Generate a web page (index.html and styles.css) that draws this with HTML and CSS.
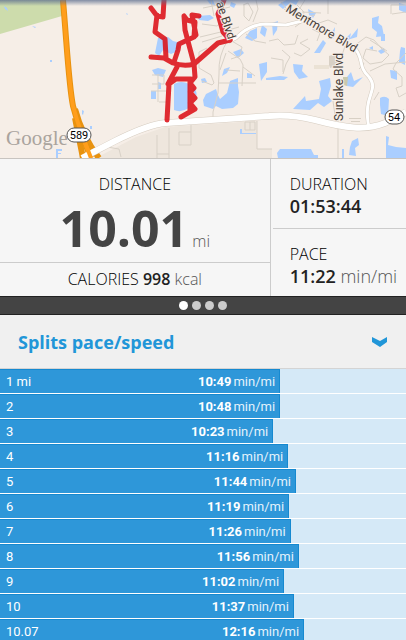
FILE: index.html
```html
<!DOCTYPE html>
<html lang="en">
<head>
  <meta charset="UTF-8">
  <meta name="viewport" content="width=device-width, initial-scale=1.0">
  <title>Workout summary</title>
  <link rel="stylesheet" href="styles.css">
</head>
<body>
  <div class="map">
    <svg viewBox="0 0 406 158" preserveAspectRatio="xMidYMid slice" role="img" aria-label="Route map">
      <defs>
        <linearGradient id="shade" x1="0" y1="0" x2="0" y2="1">
          <stop offset="0" stop-color="#5c6d8e" stop-opacity=".75"/>
          <stop offset="1" stop-color="#5c6d8e" stop-opacity="0"/>
        </linearGradient>
      </defs>
      <rect width="406" height="158" fill="#f6eee7"/>
      <path d="M0 0H62V16L0 34Z" fill="#cddcac"/>
      <path d="M96 158L136 137L165 127L257 121V149H272V158Z" fill="#eee6dd"/>

      <!-- lakes -->
      <g fill="#aaceff">
        <path d="M4 6l3 2 1 3-3-2zM32 26l4 1-1 1zM126 13l2 1-1 1zM50 60h2v2h-2zM82 110l2 1-1 4-1-1zM90 126h2v3h-2zM56 149h6v2h-4v2h3v1h-3v4h-2z"/>
        <path d="M174 84Q181 80 189 84V108Q181 113 174 110ZM158 38l10-1 5 4 8 2-3 8-7 3-8-4-4 6-4-3zM152 70l6-2 8 2-3 7-8-2zM151 91h5v8h-5zM158 82l3 1v6h-3z"/>
        <path d="M203 100L206 94L212 91L216 89L218 95L220 99L227 93L230 81L238 78V86L239 92L238 104L233 108L222 109L216 106L213 109L204 106Z"/>
        <path d="M196 96q-4-5-3-9 5 5 3 9zM198 16l12-1 4 3-6 3-9-1zM245 38l5-7 7-3v10l-5 3zM233 52l8-3 3 4-6 5zM224 69l6-2-3 6-5 3zM201 79l4-1 2 4-5 1zM247 73l5 1v4h-5zM259 64l8-2v10l-6 9zM231 2l5 2-2 4-4-2zM262 25l5 4-2 8-5-4zM207 0h6l2 5-5-1z"/>
        <path d="M293 64L303 65L302 71L308 77L299 79L294 72ZM319 81L330 78L331 86L328 96L332 101L324 107L318 103L310 110L293 109L305 96L306 101L319 99L321 89ZM347 77L351 72L354 81L363 77L353 87L347 86Z"/>
        <path d="M372 18l7-2-1 7 4 3 2 10-8 1 1-5-5-4zM314 53l9-13 3 3-6 10zM328 39l7-12-1 12zM346 38l5-5-1 5 8-10-1 9-10 3zM380 98q5-3 9 1l-1 17-7-2-1-9zM399 3l7 2v8l-7-3zM381 34h4v7h-4zM401 47l4 1v17l-6-3 1-11zM378 51l6-3 1 4-4 2zM390 70l7 1v9l-6-2zM369 48l4-2v4z"/>
        <path d="M266 78l14-2 8 1-4 3h-18zM272 23l6-2-1 9-4 6zM278 5l8-5 5 2-8 7zM286 0h13l-3 5zM308 9l8 4-3 5-4-3zM277 153l3-4h31l3 6h4v3h-40zM352 141l6-3 1 7-4 3 1 8-7-1 1-8zM342 149h2v9h-2zM386 136l3 1-1 8 8 2 10 1v10h-20zM240 129h2v4h14v1h-16z"/>
      </g>

      <!-- side streets -->
      <g class="streets">
        <path d="M80 158V149L96 150L101 146L119 149L121 157M157 135V158M169 128V158M191 125V145H179V132H191M157 154H169M245 122V130H255V122H245M250 122V130M257 121V149H272"/>
        <path d="M202 24L217 26L224 20M200 37L225 31L239 27M202 42L222 36M199 68L211 75L214 83L212 85L202 81M207 48L199 52V68M152 75H164V84H152M158 74V102M151 91H167M159 102H167"/>
        <path d="M228 40Q218 55 219 74L218 93L213 112V117M228 51L240 59L243 65L242 86M226 53L220 70M230 40L242 47L240 56L231 59M246 34L255 41L266 43M217 10L230 7M243 5L248 3L253 12L249 21L244 16V5M243 67L255 76M226 70L240 71M218 83H256"/>
        <path d="M203 8L218 5L224 14M211 0L214 16M256 0L258 9L253 22M266 25L280 24M281 2L290 13L300 8L305 0M284 9L299 19L315 15M302 12L321 13M328 0V14M297 5L304 12L302 22L295 27M282 50L290 57L286 64L283 74M269 41L278 39L284 45L295 44L298 35M271 58L283 60V72M294 53L301 56L310 49L300 43L308 39M312 29L320 33L317 41M316 24L328 20L337 24"/>
        <path d="M345 46L339 65M354 46L366 37L374 40L381 48L389 55L382 62L370 64L363 58L366 49L377 51M356 53L364 64L359 69M370 40L387 51M391 14V5H406M392 14L406 12M370 71L385 64L406 62M406 53L396 63L393 69L402 77L402 86L396 88L399 97L406 93M338 116V158M333 101L335 115M379 92L374 100"/>
      </g>
      <g fill="#d8d0c5">
        <path d="M329 56l6-2 2 2v10l-7 2-1-3zM349 118h12v1h-12zM351 121h9v1h-9z"/>
        <path d="M314 65h15v4h-15z" fill="#ebe2d5"/>
        <path d="M343 77h5l-1 9-4-1z" fill="#c9c9ae"/>
      </g>

      <!-- highway 589 -->
      <path d="M63 0C68 61 69 86 73 106Q80 132 91 158" class="highway-edge"/>
      <path d="M75 109Q82 136 99 158M75 118L83 158" class="highway-edge" stroke-width="4"/>
      <path d="M63 0C68 61 69 86 73 106Q80 132 91 158" class="highway"/>

      <!-- main roads -->
      <g class="road-edge">
        <path d="M88 155L115 141Q149 124 166 123L269 116Q290 114 315 120C345 128 365 131 385 123L406 112" class="wide"/>
        <path d="M228 42L236 38Q250 24 266 24L286 25L310 19"/>
        <path d="M353 46C365 58 357 66 369 77C380 91 362 94 369 128"/>
      </g>
      <g class="road">
        <path d="M82 158L115 141Q149 124 166 123L269 116Q290 114 315 120C345 128 365 131 385 123L406 112" class="wide"/>
        <path d="M228 42L236 38Q250 24 266 24L286 25L310 19"/>
        <path d="M353 46C365 58 357 66 369 77C380 91 362 94 369 128"/>
      </g>
      <path d="M84 140L91 158" class="highway"/>

      <!-- recorded route -->
      <g class="route">
        <path d="M164 0L163 17L157 16L151 8M157 15L155 32L165 39L166 58M151 57L164 58L173 63Q184 67 194 64L218 43L230 40"/>
        <path d="M224 0L218 14L223 32L230 40M174 62L178 50L179 44L194 37L196 35L192 15L199 16M194 37L195 22L187 20L184 16L185 30L194 64L195 77L190 83L194 88L190 92L195 98L190 103L195 109L181 117M191 79H176L169 84L167 120M177 67L168 84M190 80V110"/>
      </g>

      <g class="map-text">
        <text class="google" x="6" y="145">Google</text>
        <text transform="translate(285 11) rotate(31)">Mentmore Blvd</text>
        <text transform="translate(343 121) rotate(-90)">Sunlake Blvd</text>
        <text transform="translate(216 3) rotate(72)">ae Blvd</text>
      </g>
      <g class="shield">
        <rect x="67" y="128" width="24" height="14" rx="7"/>
        <text x="79" y="139">589</text>
        <rect x="385" y="110" width="19" height="14" rx="7"/>
        <text x="394" y="121">54</text>
      </g>
      <rect width="406" height="6" fill="url(#shade)"/>
    </svg>
  </div>

  <div class="stats">
    <div class="stats-main">
      <div class="distance">
        <div class="label">DISTANCE</div>
        <div class="total"><strong>10.01</strong> <span class="unit">mi</span></div>
      </div>
      <div class="calories">CALORIES <strong>998</strong> <span class="unit">kcal</span></div>
    </div>
    <div class="stats-side">
      <div class="stat">
        <div class="label">DURATION</div>
        <div class="value"><strong>01:53:44</strong></div>
      </div>
      <div class="stat">
        <div class="label">PACE</div>
        <div class="value"><strong>11:22</strong> <span class="unit">min/mi</span></div>
      </div>
    </div>
  </div>

  <div class="pager">
    <button class="dot active" aria-label="Page 1"></button>
    <button class="dot" aria-label="Page 2"></button>
    <button class="dot" aria-label="Page 3"></button>
    <button class="dot" aria-label="Page 4"></button>
  </div>

  <div class="splits-header">
    <h2>Splits pace/speed</h2>
    <button class="toggle" aria-label="Toggle splits">
      <svg width="16" height="10" viewBox="0 0 16 10"><path d="M0 0L8 4L15 0V5L8 10L0 5Z" fill="#2196d8"/></svg>
    </button>
  </div>

  <ul class="splits">
    <li><div class="bar" style="width: 69%"><span>1 mi</span><span class="pace"><b>10:49</b><span>min/mi</span></span></div></li>
    <li><div class="bar" style="width: 69%"><span>2</span><span class="pace"><b>10:48</b><span>min/mi</span></span></div></li>
    <li><div class="bar" style="width: 67.3%"><span>3</span><span class="pace"><b>10:23</b><span>min/mi</span></span></div></li>
    <li><div class="bar" style="width: 71%"><span>4</span><span class="pace"><b>11:16</b><span>min/mi</span></span></div></li>
    <li><div class="bar" style="width: 72.9%"><span>5</span><span class="pace"><b>11:44</b><span>min/mi</span></span></div></li>
    <li><div class="bar" style="width: 71.2%"><span>6</span><span class="pace"><b>11:19</b><span>min/mi</span></span></div></li>
    <li><div class="bar" style="width: 71.6%"><span>7</span><span class="pace"><b>11:26</b><span>min/mi</span></span></div></li>
    <li><div class="bar" style="width: 73.6%"><span>8</span><span class="pace"><b>11:56</b><span>min/mi</span></span></div></li>
    <li><div class="bar" style="width: 70%"><span>9</span><span class="pace"><b>11:02</b><span>min/mi</span></span></div></li>
    <li><div class="bar" style="width: 72.4%"><span>10</span><span class="pace"><b>11:37</b><span>min/mi</span></span></div></li>
    <li><div class="bar" style="width: 74.9%"><span>10.07</span><span class="pace"><b>12:16</b><span>min/mi</span></span></div></li>
  </ul>
</body>
</html>
```
FILE: styles.css
```css
* {
  box-sizing: border-box;
}
body {
  display: flex;
  flex-direction: column;
  height: 100vh;
  margin: 0;
  overflow: hidden;
  background-color: #f6f6f6;
  color: #222;
  font-family: "Open Sans", "Noto Sans", sans-serif;
  font-size: 16px;
}
button {
  padding: 0;
  border: none;
  background: none;
  cursor: pointer;
}

/* map */
.map {
  flex: none;
  border-bottom: 1px solid #c8c4c0;
}
.map svg {
  display: block;
  width: 100%;
}
.streets {
  fill: none;
  stroke: #d8d1c7;
  stroke-width: 1;
}
.road-edge {
  fill: none;
  stroke: #d5ccc0;
  stroke-width: 4;
}
.road-edge .wide {
  stroke-width: 7;
}
.road {
  fill: none;
  stroke: #fff;
  stroke-width: 3;
}
.road .wide {
  stroke-width: 6;
}
.highway-edge {
  fill: none;
  stroke: #e8920f;
  stroke-width: 6;
}
.highway {
  fill: none;
  stroke: #ff9e1c;
  stroke-width: 4;
}
.route {
  fill: none;
  stroke: #dc1118;
  stroke-width: 5;
  stroke-linecap: round;
  stroke-linejoin: round;
  opacity: 0.88;
}
.map-text {
  fill: #484039;
  font-family: Roboto, sans-serif;
  font-size: 12px;
  stroke: #f6eee7;
  stroke-width: 2;
  paint-order: stroke;
}
.map-text .google {
  fill: #aaa49e;
  font-family: "Liberation Serif", serif;
  font-size: 21px;
}
.shield rect {
  fill: #fff;
  stroke: #555;
}
.shield text {
  font-family: Roboto, sans-serif;
  font-size: 11px;
  text-anchor: middle;
}

/* totals */
.stats {
  display: grid;
  flex: none;
  grid-template-columns: 2fr 1fr;
  height: 137px;
}
.stats-main {
  display: flex;
  flex-direction: column;
  border-right: 1px solid #ccc;
  text-align: center;
}
.distance {
  flex: 1;
  padding-top: 15px;
  border-bottom: 1px solid #ccc;
}
.label {
  line-height: 20px;
}
.label,
.calories {
  color: #000;
  font-weight: 300;
}
.total {
  height: 68px;
  line-height: 68px;
}
.total strong {
  color: #444;
  font-size: 50px;
}
.unit {
  color: #555;
  font-weight: 300;
}
.calories {
  line-height: 33px;
}
.calories strong,
.value strong {
  color: #222;
  font-weight: 600;
}
.stats-side {
  display: grid;
  grid-template-rows: 69px 1fr;
  margin-left: 2px;
}
.stat {
  padding: 15px 0 0 17px;
  white-space: nowrap;
}
.stat + .stat {
  border-top: 1px solid #ccc;
}
.value {
  font-size: 18px;
  line-height: 25px;
}

/* page dots */
.pager {
  display: flex;
  flex: none;
  align-items: center;
  justify-content: center;
  gap: 4px;
  height: 19px;
  border-top: 1px solid #222;
  border-bottom: 1px solid #222;
  background-color: #444;
}
.dot {
  width: 9px;
  height: 9px;
  border-radius: 50%;
  background-color: #ccc;
}
.dot.active {
  background-color: #fff;
}

/* splits */
.splits-header {
  display: flex;
  flex: none;
  align-items: center;
  justify-content: space-between;
  height: 54px;
  padding: 0 18px;
  border-bottom: 1px solid #d4d4d4;
  background-color: #f0f0f0;
}
.splits-header h2 {
  margin: 0;
  color: #2196d8;
  font-size: 18px;
  font-weight: 700;
}
.toggle svg {
  display: block;
}
.splits {
  flex: 1;
  min-height: 0;
  margin: 0;
  padding: 0;
  overflow: hidden;
  background-color: #fff;
  list-style: none;
}
.splits li {
  margin-bottom: 1px;
  background-color: #d5e9f7;
}
.bar {
  display: flex;
  justify-content: space-between;
  height: 24px;
  padding: 0 4px 0 6px;
  border-top: 1px solid #1689d0;
  border-right: 1px solid #1689d0;
  background-color: #2e97d9;
  color: #fff;
  font-family: Roboto, sans-serif;
  font-size: 13px;
  line-height: 23px;
}
.pace {
  display: flex;
  gap: 2px;
}
.pace span {
  color: #e4f2fb;
}
```
